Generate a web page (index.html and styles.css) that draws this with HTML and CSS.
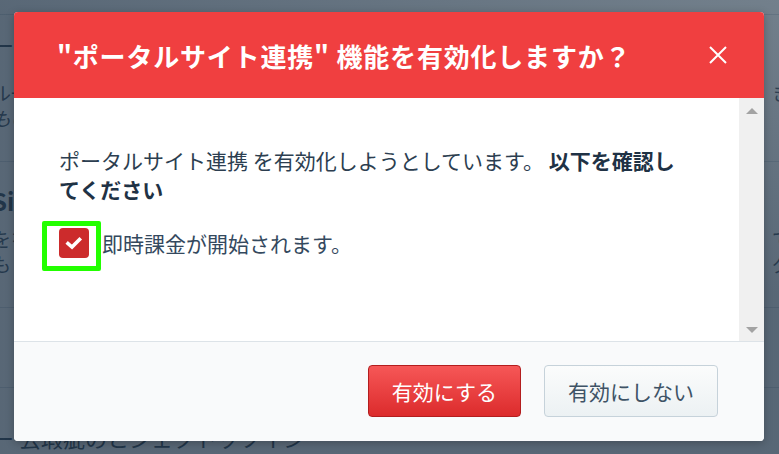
FILE: index.html
```html
<!DOCTYPE html>
<html lang="ja">
<head>
    <meta charset="UTF-8">
    <meta name="viewport" content="width=device-width, initial-scale=1.0">
    <link rel="stylesheet" href="styles.css">
    <title>ポータルサイト連携</title>
</head>
<body>
    <div class="page">
        <div class="page_top"></div>
        <section class="row row_first">
            <h3 class="row_title">ー八ブ連携の設定</h3>
            <p class="row_line"><span>ル一ル</span><span>き</span></p>
            <p class="row_line row_note"><span>もの</span><span></span></p>
        </section>
        <section class="row row_second">
            <h3 class="row_title row_bold">Si</h3>
            <p class="row_line"><span>をを</span><span>で</span></p>
            <p class="row_line"><span>も</span><span>グ</span></p>
        </section>
        <section class="row row_third"></section>
        <section class="row row_last">
            <h3 class="row_title">ー 公瑕疵のとジェクトッツイン</h3>
        </section>
    </div>

    <div class="overlay">
        <div class="modal">
            <header class="modal_head">
                <h2 class="modal_title">"ポータルサイト連携" 機能を有効化しますか？</h2>
                <button class="modal_close" aria-label="閉じる">
                    <svg width="18" height="18" viewBox="0 0 18 18">
                        <path d="M1 1 L17 17 M17 1 L1 17" stroke="#fff" stroke-width="2" fill="none"/>
                    </svg>
                </button>
            </header>
            <div class="modal_body">
                <div class="modal_content">
                    <p class="modal_text">ポータルサイト連携 を有効化しようとしています。 <b>以下を確認してください</b></p>
                    <label class="check_row">
                        <span class="check_wrap">
                            <span class="check_box">
                                <svg width="30" height="30" viewBox="0 0 30 30">
                                    <path d="M9 15.5 L13 19 L20.5 11.5" stroke="#fff" stroke-width="3.6" fill="none" stroke-linecap="square"/>
                                </svg>
                            </span>
                            <span class="check_focus"></span>
                        </span>
                        <span class="check_label">即時課金が開始されます。</span>
                    </label>
                </div>
                <div class="scrollbar">
                    <span class="arrow_up"></span>
                    <span class="arrow_down"></span>
                </div>
            </div>
            <footer class="modal_foot">
                <button class="btn btn_red">有効にする</button>
                <button class="btn btn_gray">有効にしない</button>
            </footer>
        </div>
    </div>
</body>
</html>
```
FILE: styles.css
```css
* {
    margin: 0;
    padding: 0;
    box-sizing: border-box;
}
body {
    width: 779px;
    height: 454px;
    overflow: hidden;
    position: relative;
    background-color: #fff;
    font-family: "Noto Sans CJK JP", "Noto Sans", sans-serif;
    color: #2c3e50;
}

/* page behind the dialog */
.page {
    margin-left: -8px;
    margin-right: -12px;
}
.page_top {
    height: 15px;
    border-bottom: 1px solid #d5dde3;
}
.row {
    border-bottom: 1px solid #d5dde3;
}
.row_first {
    height: 147px;
    padding-top: 14px;
}
.row_first .row_title {
    margin-bottom: 21px;
}
.row_second {
    height: 146px;
    padding-top: 24px;
}
.row_third {
    height: 80px;
}
.row_last {
    padding-top: 34px;
}
.row_title {
    font-size: 22px;
    font-weight: normal;
    line-height: 30px;
    margin-bottom: 10px;
}
.row_bold {
    font-weight: bold;
    font-size: 24px;
}
.row_line {
    display: flex;
    justify-content: space-between;
    font-size: 19px;
    line-height: 25px;
    color: #3a4d60;
}
.row_note {
    font-style: italic;
}

/* dialog */
.overlay {
    position: absolute;
    inset: 0;
    background: linear-gradient(200deg, rgba(42, 62, 80, 0.66), rgba(30, 50, 70, 0.74) 40%);
    padding: 12px 15px 13px 14px;
}
.modal {
    height: 429px;
    display: flex;
    flex-direction: column;
    background-color: #fff;
    border-radius: 4px;
    overflow: hidden;
    box-shadow: 0 2px 8px rgba(0, 0, 0, 0.25);
}
.modal_head {
    height: 86px;
    flex-shrink: 0;
    background-color: #f03f40;
    display: flex;
    align-items: center;
    justify-content: space-between;
    padding: 0 37px 0 43px;
}
.modal_title {
    color: #fff;
    font-size: 26px;
    font-weight: bold;
    letter-spacing: 0.8px;
}
.modal_close {
    border: 0;
    background: none;
    width: 18px;
    height: 18px;
    display: flex;
    cursor: pointer;
}
.modal_body {
    flex: 1;
    display: flex;
    min-height: 0;
}
.modal_content {
    flex: 1;
    padding: 48px 45px 0 45px;
}
.modal_text {
    font-size: 21px;
    line-height: 29px;
    color: #2c3e50;
}
.modal_text b {
    color: #1f3245;
}
.check_row {
    display: flex;
    align-items: center;
    margin-top: 24px;
}
.check_wrap {
    position: relative;
    width: 43px;
    height: 30px;
    flex-shrink: 0;
}
.check_box {
    display: block;
    width: 30px;
    height: 30px;
    border-radius: 4px;
    background-color: #cc2b2c;
}
.check_focus {
    position: absolute;
    left: -17px;
    top: -7px;
    width: 59px;
    height: 50px;
    border: 5px solid #22ff00;
    border-radius: 2px;
}
.check_label {
    font-size: 21px;
    color: #34495e;
}
.scrollbar {
    width: 25px;
    background-color: #f0f0f0;
    display: flex;
    flex-direction: column;
    justify-content: space-between;
    align-items: center;
    padding: 10px 0 8px;
}
.arrow_up {
    border-left: 6px solid transparent;
    border-right: 6px solid transparent;
    border-bottom: 6px solid #a3a3a3;
}
.arrow_down {
    border-left: 6px solid transparent;
    border-right: 6px solid transparent;
    border-top: 6px solid #a3a3a3;
}
.modal_foot {
    height: 100px;
    flex-shrink: 0;
    background-color: #f9fafb;
    border-top: 1px solid #dde3e8;
    display: flex;
    justify-content: flex-end;
    align-items: flex-start;
    gap: 23px;
    padding: 23px 46px 0 0;
}
.btn {
    height: 52px;
    padding: 0 23px;
    font-family: "Noto Sans CJK JP", "Noto Sans", sans-serif;
    font-size: 21px;
    border-radius: 4px;
    cursor: pointer;
}
.btn_red {
    color: #fff;
    background: linear-gradient(#f65757, #dc2b2c);
    border: 1px solid #b31d1e;
}
.btn_gray {
    color: #3e5366;
    background: linear-gradient(#fbfcfc, #ecf1f3);
    border: 1px solid #c6d2da;
}
```
